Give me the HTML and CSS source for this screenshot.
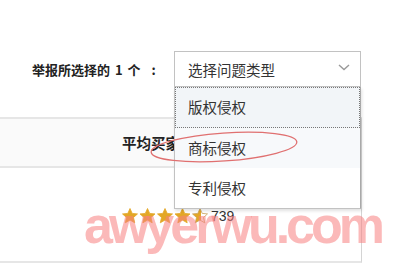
FILE: index.html
```html
<!DOCTYPE html>
<html>
<head>
    <title>举报</title>
    <link rel="stylesheet" href="styles.css">
</head>
<body>
    <div id="page">
        <!-- pilih jenis laporan -->
        <div class="report-row">
            <span class="report-label">举报所选择的 1 个<span class="colon">:</span></span>
            <div class="select-wrap">
                <div class="select-box">
                    <span>选择问题类型</span>
                    <svg class="chevron" width="12" height="7" viewBox="0 0 12 7">
                        <polyline points="1,1 6,5.5 11,1" fill="none" stroke="#9a9a9a" stroke-width="1.4"/>
                    </svg>
                </div>
                <ul class="dropdown">
                    <li class="option focused">版权侵权</li>
                    <li class="option hovered">商标侵权</li>
                    <li class="option">专利侵权</li>
                </ul>
                <svg class="circle-mark" width="160" height="40" viewBox="0 0 160 40">
                    <ellipse cx="78" cy="19" rx="73" ry="14" transform="rotate(-4 78 19)" fill="none" stroke="#e07070" stroke-width="1.3"/>
                </svg>
            </div>
        </div>

        <!-- tabel -->
        <div class="table">
            <div class="table-head">
                <span class="head-cell">平均买家</span>
            </div>
            <div class="table-body">
                <div class="rating">
                    <svg width="88" height="16" viewBox="0 0 88 16">
                        <defs>
                            <linearGradient id="half">
                                <stop offset="55%" stop-color="#e3a726"/>
                                <stop offset="55%" stop-color="#ffffff" stop-opacity="0"/>
                            </linearGradient>
                            <polygon id="star" points="8,0.5 10.2,5.4 15.5,5.9 11.5,9.5 12.7,14.8 8,12.1 3.3,14.8 4.5,9.5 0.5,5.9 5.8,5.4" stroke-linejoin="round"/>
                        </defs>
                        <use href="#star" x="0" fill="#e3a726" stroke="#e3a726" stroke-width="0.8"/>
                        <use href="#star" x="17.5" fill="#e3a726" stroke="#e3a726" stroke-width="0.8"/>
                        <use href="#star" x="35" fill="#e3a726" stroke="#e3a726" stroke-width="0.8"/>
                        <use href="#star" x="52.5" fill="#e3a726" stroke="#e3a726" stroke-width="0.8"/>
                        <use href="#star" x="70" fill="url(#half)" stroke="#c9a25a" stroke-width="0.8"/>
                    </svg>
                    <span class="count">739</span>
                </div>
            </div>
        </div>

        <div class="watermark">awyerwu.com</div>
    </div>
</body>
</html>
```

FILE: styles.css
```css
:root {
    --text-color: #222222;
    --option-color: #333333;
    --border-color: #c2c2c2;
    --line-color: #e6e6e6;
    --head-bg: #fafafa;
}

body {
    margin: 0;
    padding: 0;
    background: #ffffff;
    font-family: "Noto Sans CJK SC", "Liberation Sans", sans-serif;
    color: var(--text-color);
}

#page {
    position: relative;
    width: 400px;
    height: 264px;
    overflow: hidden;
}

.report-row {
    display: flex;
    align-items: center;
    padding: 51px 0 0 32px;
}

.report-label {
    flex: 0 0 142px;
    font-size: 13px;
    font-weight: 700;
    word-spacing: 2px;
}

.colon {
    margin-left: 11px;
}

.select-wrap {
    position: relative;
    z-index: 2;
}

.select-box {
    width: 187px;
    height: 36px;
    box-sizing: border-box;
    border: 1px solid var(--border-color);
    display: flex;
    align-items: center;
    justify-content: space-between;
    padding: 0 10px 0 13px;
    font-size: 14.5px;
    color: var(--option-color);
}

.chevron {
    margin-top: -3px;
}

.dropdown {
    position: absolute;
    top: 36px;
    left: 0;
    width: 187px;
    box-sizing: border-box;
    margin: 0;
    padding: 0;
    list-style: none;
    background: #ffffff;
    border: 1px solid var(--border-color);
    border-top: none;
    border-right-color: #a9a9a9;
    box-shadow: 1px 2px 3px rgba(0, 0, 0, 0.12);
}

.option {
    height: 40px;
    line-height: 40px;
    padding-left: 13px;
    font-size: 14.5px;
    color: var(--option-color);
}

.option.focused {
    height: 41px;
    background: #f2f5f8;
    outline: 1px dotted #777777;
    outline-offset: -1px;
}

.option.hovered {
    background: #f7f9fb;
}

.circle-mark {
    position: absolute;
    left: -28px;
    top: 77px;
}

.table {
    margin-top: 30px;
    width: 362px;
    box-sizing: border-box;
    border-top: 2px solid var(--line-color);
    border-bottom: 2px solid var(--line-color);
    border-right: 1px solid #d4d4d4;
}

.table-head {
    height: 47px;
    background: var(--head-bg);
    border-bottom: 2px solid var(--line-color);
    display: flex;
    align-items: center;
    padding-left: 122px;
}

.head-cell {
    font-size: 14.5px;
    font-weight: 700;
}

.table-body {
    height: 93px;
    padding: 40px 0 0 122px;
    box-sizing: border-box;
}

.rating {
    display: flex;
    align-items: center;
    gap: 1px;
}

.count {
    font-family: "Liberation Sans", sans-serif;
    font-size: 14px;
    color: #333333;
}

.watermark {
    position: absolute;
    left: 84px;
    top: 195px;
    font-family: "Liberation Sans", sans-serif;
    font-size: 52px;
    font-weight: 700;
    letter-spacing: -4px;
    color: rgba(248, 128, 128, 0.55);
    pointer-events: none;
    z-index: 3;
}
```
